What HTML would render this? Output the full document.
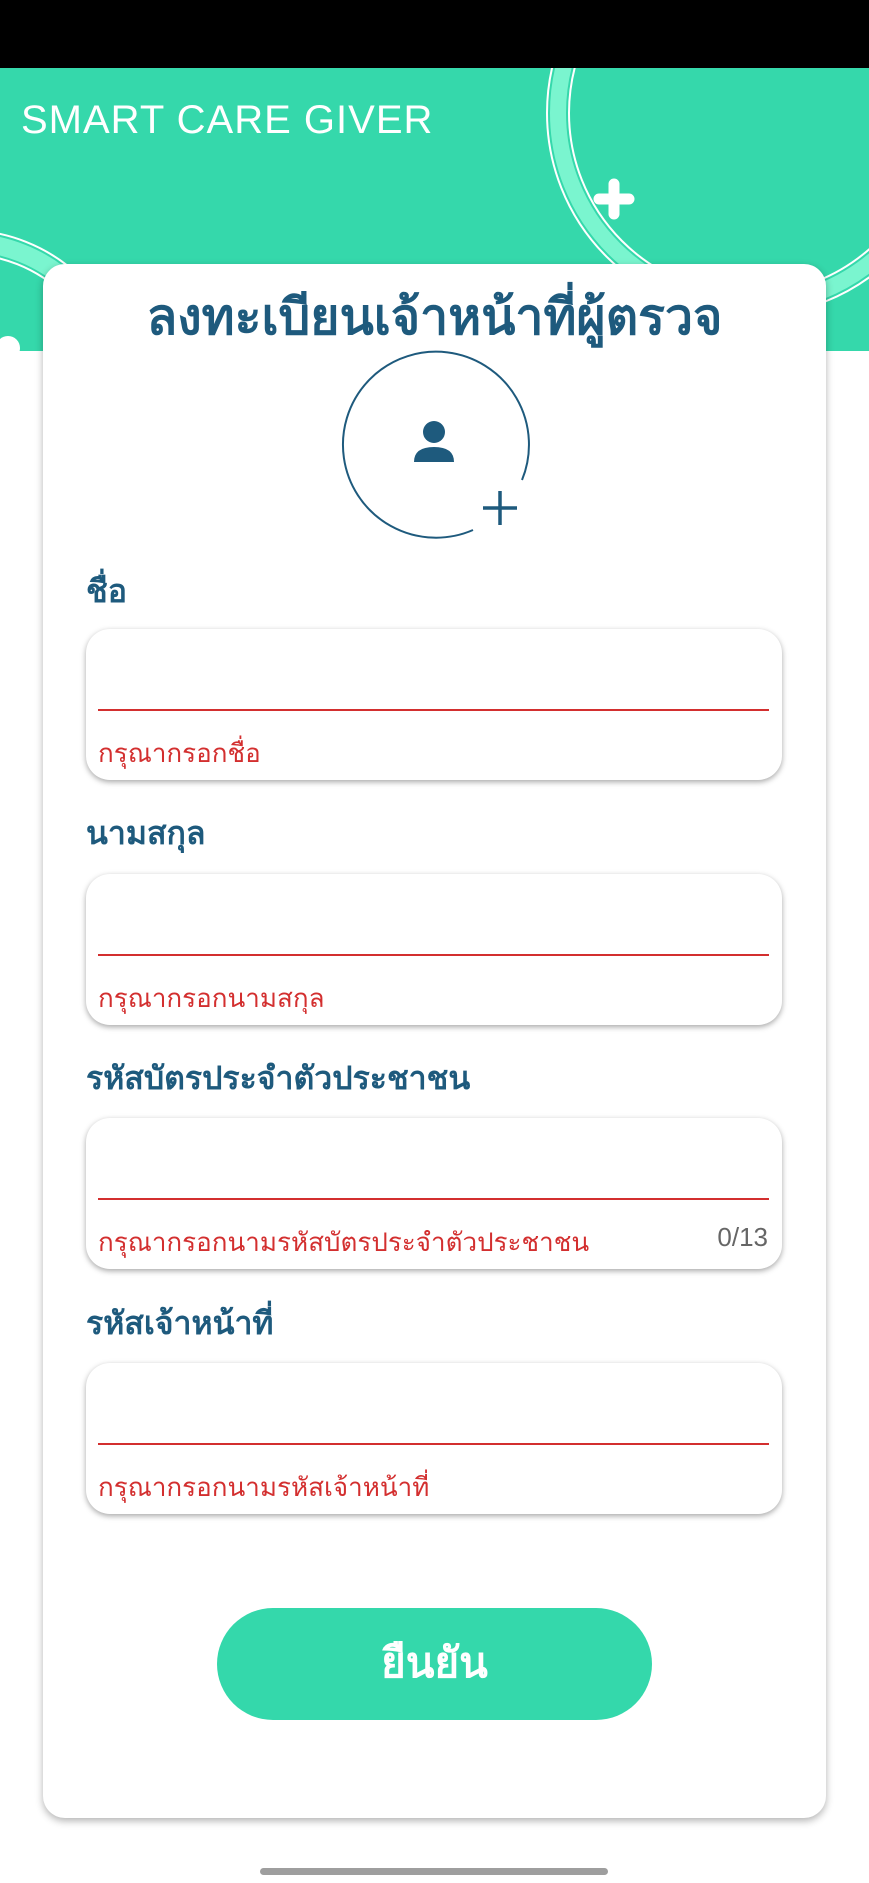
<!DOCTYPE html>
<html><head><meta charset="utf-8"><style>
*{margin:0;padding:0;box-sizing:border-box}
body{width:869px;height:1883px;background:#fff;position:relative;overflow:hidden;font-family:"Liberation Sans","Noto Sans CJK SC",sans-serif}
.bar{position:absolute;left:0;top:0;width:869px;height:68px;background:#000}
.hdr{position:absolute;left:0;top:68px;width:869px;height:283px;background:#35d8ab;overflow:hidden}
.brand{position:absolute;left:21px;top:30px;color:#fff;font-size:40px;letter-spacing:1px}
.card{position:absolute;left:43px;top:264px;width:783px;height:1554px;background:#fff;border-radius:22px;box-shadow:0 3px 8px rgba(0,0,0,.3)}
.title{position:absolute;left:0;top:278px;width:869px;text-align:center;color:#1e5a7d;font-size:50px;font-weight:bold}
.lbl{position:absolute;left:86px;color:#1e5a7d;font-size:32px;font-weight:bold}
.fld{position:absolute;left:86px;width:696px;height:151px;background:#fff;border-radius:24px;box-shadow:0 2px 6px rgba(0,0,0,.35)}
.fld .ln{position:absolute;left:12px;right:13px;top:80px;height:2px;background:#d32f2f}
.fld .er{position:absolute;left:12px;top:104px;color:#d32f2f;font-size:26px}
.fld .ct{position:absolute;right:14px;top:104px;color:#666;font-size:26px}
.btn{position:absolute;left:217px;top:1608px;width:435px;height:112px;border-radius:56px;background:#34d8ab;color:#fff;font-size:42px;font-weight:bold;text-align:center;line-height:110px}
.home{position:absolute;left:260px;top:1868px;width:348px;height:7px;border-radius:4px;background:#9e9e9e}
</style></head><body>
<div class="bar"></div>
<div class="hdr">
<svg width="869" height="283" style="position:absolute;left:0;top:0">
<circle cx="750" cy="45" r="192" fill="none" stroke="#7af5cf" stroke-width="16"/>
<circle cx="750" cy="45" r="203" fill="none" stroke="#fff" stroke-width="2"/>
<circle cx="750" cy="45" r="181" fill="none" stroke="#fff" stroke-width="2"/>
<circle cx="-36" cy="330" r="156" fill="none" stroke="#7af5cf" stroke-width="18"/>
<circle cx="-36" cy="330" r="168" fill="none" stroke="#fff" stroke-width="2"/>
<circle cx="-36" cy="330" r="144" fill="none" stroke="#fff" stroke-width="2"/>
<path d="M614 116v30M599 131h30" stroke="#fff" stroke-width="11" stroke-linecap="round"/>
<circle cx="8" cy="280" r="12" fill="#fff"/>
</svg>
<div class="brand">SMART CARE GIVER</div>
</div>
<div class="card"></div>
<div class="title">ลงทะเบียนเจ้าหน้าที่ผู้ตรวจ</div>
<svg width="869" height="200" style="position:absolute;left:0;top:340px">
<path d="M473 190 A93 93 0 1 1 522 140" fill="none" stroke="#1e5a7d" stroke-width="2"/>
<path d="M483 168h34M500 151v34" stroke="#1e5a7d" stroke-width="3.5"/>
<circle cx="434" cy="92" r="11" fill="#1e5a7d"/>
<path d="M414 122 q0 -15 20 -15 q20 0 20 15z" fill="#1e5a7d"/>
</svg>
<div class="lbl" style="top:566px">ชื่อ</div>
<div class="fld" style="top:629px"><div class="ln"></div><div class="er">กรุณากรอกชื่อ</div></div>
<div class="lbl" style="top:808px">นามสกุล</div>
<div class="fld" style="top:874px"><div class="ln"></div><div class="er">กรุณากรอกนามสกุล</div></div>
<div class="lbl" style="top:1053px">รหัสบัตรประจำตัวประชาชน</div>
<div class="fld" style="top:1118px"><div class="ln"></div><div class="er">กรุณากรอกนามรหัสบัตรประจำตัวประชาชน</div><div class="ct">0/13</div></div>
<div class="lbl" style="top:1298px">รหัสเจ้าหน้าที่</div>
<div class="fld" style="top:1363px"><div class="ln"></div><div class="er">กรุณากรอกนามรหัสเจ้าหน้าที่</div></div>
<div class="btn">ยืนยัน</div>
<div class="home"></div>
</body></html>
